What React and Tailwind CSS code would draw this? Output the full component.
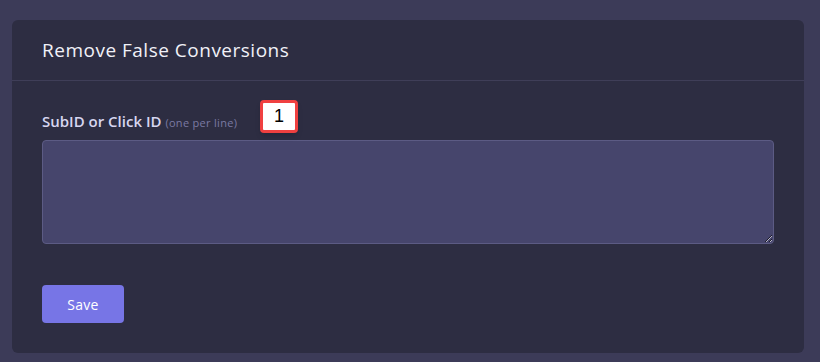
import React from 'react';

const App = () => {
  return (
    <div className="min-h-screen w-full bg-[#3c3b58] px-3 pt-5 pb-[10px]" style={{ fontFamily: '"Open Sans", "Noto Sans", sans-serif' }}>
      <div className="w-[792px] rounded-md bg-[#2d2d42]">
        {/* Header */}
        <div className="h-[61px] flex items-center px-[30px] border-b border-[#3f3e58]">
          <h2 className="text-[19px] text-[#f1f1f8] tracking-[0.5px]">Remove False Conversions</h2>
        </div>

        {/* Body */}
        <div className="px-[30px] pt-[30px] pb-[30px]">
          <div className="relative">
            <label className="block h-[20px] text-[15px] font-semibold text-[#d7d6f0] mb-[9px] leading-[20px]">
              SubID or Click ID <span className="text-[11px] font-normal text-[#7b7aa3] tracking-[0.3px]">(one per line)</span>
            </label>
            <span className="absolute left-[218px] top-[-11px] w-[38px] h-[33px] bg-white border-[3px] border-[#f04040] rounded-[4px] shadow-md flex items-center justify-center text-[18px] text-black" style={{ fontFamily: '"Liberation Sans", Arial, sans-serif' }}>
              1
            </span>
            <textarea className="block w-[732px] h-[104px] rounded-[4px] bg-[#46456c] border border-[#5c5b84] outline-none text-white p-2" />
          </div>

          <button className="mt-[41px] w-[82px] h-[38px] rounded-[4px] bg-[#7775e6] text-white text-[14px] tracking-[0.3px]">
            Save
          </button>
        </div>
      </div>
    </div>
  );
};

export default App;
